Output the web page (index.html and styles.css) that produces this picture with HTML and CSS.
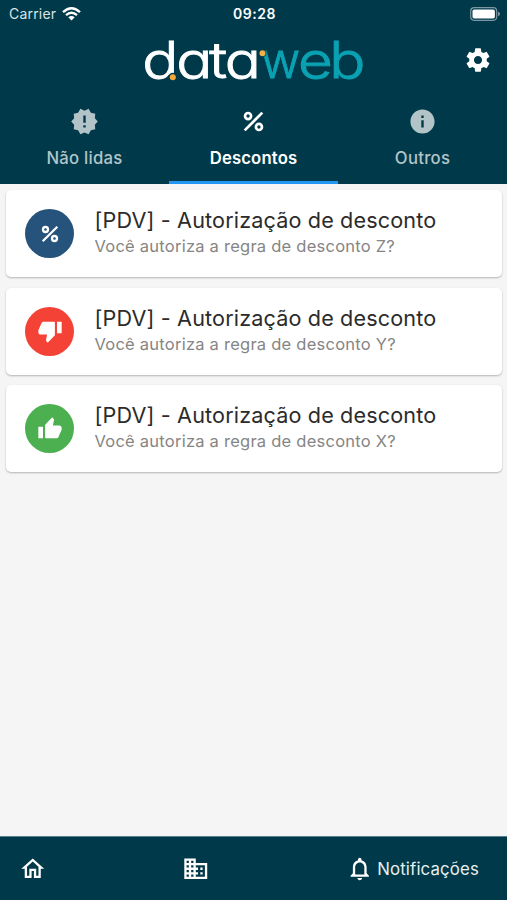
FILE: index.html
```html
<!DOCTYPE html>
<html lang="pt-BR">
<head>
<meta charset="utf-8">
<meta name="viewport" content="width=device-width, initial-scale=1">
<title>Notificações</title>
<link rel="stylesheet" href="styles.css">
</head>
<body>
<div class="app">
  <header class="header">
    <div class="status">
      <div class="carrier"><span class="carrier-name">Carrier</span>
        <svg class="wifi" viewBox="0 0 19 14" fill="none" stroke="#fff" stroke-width="2.3"><path d="M1 5.2Q9.500-2.600 18 5.200M4 8.200Q9.500 3.300 15 8.200"/><path d="M6.300 10.300Q9.500 7.600 12.700 10.300L9.500 13.600Z" fill="#fff" stroke="none"/></svg>
      </div>
      <span class="clock">09:28</span>
      <svg class="battery" viewBox="0 0 30 14"><rect x=".7" y=".7" width="26" height="12.600" rx="3.500" fill="none" stroke="#7d98a3" stroke-width="1.200"/><rect x="2.500" y="2.500" width="22.400" height="9" rx="1.800" fill="#fff"/><path d="M28 4.800q2 .6 2 2.200t-2 2.200z" fill="#7d98a3"/></svg>
    </div>
    <div class="brandbar">
      <svg class="logo" viewBox="0 0 222 44">
        <text class="logo-data" transform="scale(1.2 1)" y="39.500" x="-0.700 27.700 55.300 68.200">data</text>
        <text class="logo-web" transform="scale(.96 1)" y="39.500" x="123">w</text>
        <text class="logo-web" transform="scale(1.2 1)" y="39.500" x="129.200 155.300">eb</text>
        <circle cx="29.800" cy="39.300" r="4.500" fill="#003a4a"/>
        <circle cx="29.800" cy="39.300" r="3" fill="#f5a93b"/>
        <circle cx="119.500" cy="15.200" r="3.800" fill="#003a4a"/>
        <circle cx="119.500" cy="15.200" r="3" fill="#f0b14a"/>
      </svg>
      <svg class="gear" viewBox="0 0 24 24"><path d="M19.430 12.980c.04-.32.07-.64.07-.98s-.03-.66-.07-.98l2.110-1.650c.19-.15.24-.42.12-.64l-2-3.460c-.12-.22-.39-.3-.61-.22l-2.490 1c-.52-.4-1.080-.73-1.690-.98l-.38-2.650C14.460 2.180 14.250 2 14 2h-4c-.25 0-.46.18-.49.42l-.38 2.650c-.61.25-1.170.59-1.690.98l-2.490-1c-.23-.09-.49 0-.61.22l-2 3.460c-.13.22-.07.49.12.64l2.110 1.650c-.04.32-.07.65-.07.98s.03.66.07.98l-2.110 1.650c-.19.15-.24.42-.12.64l2 3.460c.12.22.39.3.61.22l2.490-1c.52.4 1.080.73 1.690.98l.38 2.650c.03.24.24.42.49.42h4c.25 0 .46-.18.49-.42l.38-2.650c.61-.25 1.170-.59 1.690-.98l2.490 1c.23.09.49 0 .61-.22l2-3.460c.12-.22.07-.49-.12-.64l-2.110-1.650zM12 15.500c-1.930 0-3.500-1.570-3.500-3.500s1.570-3.500 3.500-3.500 3.500 1.570 3.500 3.500-1.570 3.500-3.500 3.500z"/></svg>
    </div>
    <nav class="tabs">
      <div class="tab">
        <svg class="tab-icon" viewBox="0 0 24 24"><path d="M23 12l-2.440-2.780.34-3.680-3.610-.82-1.890-3.180L12 3 8.600 1.540 6.710 4.720l-3.610.81.34 3.680L1 12l2.440 2.780-.34 3.690 3.610.82 1.890 3.180L12 21l3.400 1.460 1.890-3.180 3.610-.82-.34-3.680L23 12zm-10 5h-2v-2h2v2zm0-4h-2V7h2v6z"/></svg>
        <span>Não lidas</span>
      </div>
      <div class="tab active">
        <svg class="tab-icon" viewBox="0 0 24 24" fill="none" stroke="#fff" stroke-width="2.2"><circle cx="7.500" cy="7.500" r="2.500"/><circle cx="16.500" cy="16.500" r="2.500"/><path d="M4.700 19.300L19.300 4.700"/></svg>
        <span>Descontos</span>
      </div>
      <div class="tab">
        <svg class="tab-icon" viewBox="0 0 24 24"><path d="M12 2C6.480 2 2 6.480 2 12s4.480 10 10 10 10-4.480 10-10S17.520 2 12 2zm1 15h-2v-6h2v6zm0-8h-2V7h2v2z"/></svg>
        <span>Outros</span>
      </div>
    </nav>
  </header>
  <main class="list">
    <article class="card">
      <div class="avatar blue"><svg viewBox="0 0 24 24" fill="none" stroke="#fff" stroke-width="2.3"><circle cx="7.500" cy="7.500" r="2.500"/><circle cx="16.500" cy="16.500" r="2.500"/><path d="M4.700 19.300L19.300 4.700"/></svg></div>
      <div class="copy"><h2>[PDV] - Autorização de desconto</h2><p>Você autoriza a regra de desconto Z?</p></div>
    </article>
    <article class="card">
      <div class="avatar red"><svg viewBox="0 0 24 24"><path d="M22 4h-4v10h4zM2.170 11.120c-.11.25-.17.520-.17.800V13c0 1.100.9 2 2 2h5.500l-.92 4.650c-.05.22-.02.460.08.660.23.450.52.860.88 1.220L10 22l6.200-6.410V4.500L15.700 4H6.550c-.7 0-1.370.37-1.720.97z"/></svg></div>
      <div class="copy"><h2>[PDV] - Autorização de desconto</h2><p>Você autoriza a regra de desconto Y?</p></div>
    </article>
    <article class="card">
      <div class="avatar green"><svg viewBox="0 0 24 24"><path d="M2 20h4V10H2zM21.830 12.880c.11-.25.17-.520.17-.800V11c0-1.100-.9-2-2-2h-5.500l.92-4.650c.05-.22.02-.460-.08-.660-.23-.450-.52-.860-.88-1.220L14 2 7.800 8.410V19.500l.5.500h9.150c.7 0 1.370-.37 1.720-.97z"/></svg></div>
      <div class="copy"><h2>[PDV] - Autorização de desconto</h2><p>Você autoriza a regra de desconto X?</p></div>
    </article>
  </main>
  <footer class="bottom">
    <svg viewBox="0 0 24 24"><path d="M12 5.690l5 4.500V18h-2v-6H9v6H7v-7.810l5-4.500M12 3L2 12h3v8h6v-6h2v6h6v-8h3L12 3z"/></svg>
    <svg viewBox="0 0 24 24"><path d="M12 7V3H2v18h20V7H12zM6 19H4v-2h2v2zm0-4H4v-2h2v2zm0-4H4V9h2v2zm0-4H4V5h2v2zm4 12H8v-2h2v2zm0-4H8v-2h2v2zm0-4H8V9h2v2zm0-4H8V5h2v2zm10 12h-8v-2h2v-2h-2v-2h2v-2h-2V9h8v10zm-2-8h-2v2h2v-2zm0 4h-2v2h2v-2z"/></svg>
    <div class="notifications">
      <svg viewBox="0 0 24 24"><path d="M12 22c1.100 0 2-.9 2-2h-4c0 1.100.9 2 2 2zm6-6v-5c0-3.070-1.630-5.640-4.500-6.320V4c0-.83-.67-1.500-1.500-1.500s-1.500.67-1.500 1.500v.68C7.640 5.360 6 7.920 6 11v5l-2 2v1h16v-1l-2-2zm-2 1H8v-6c0-2.480 1.510-4.500 4-4.500s4 2.020 4 4.500v6z"/></svg>
      <span>Notificações</span>
    </div>
  </footer>
</div>
</body>
</html>
```
FILE: styles.css
```css
* { box-sizing: border-box; }
body { margin: 0; background: #f5f5f5; font-family: Inter, "Liberation Sans", sans-serif; }
.app { height: 900px; display: flex; flex-direction: column; }
svg { display: block; fill: #fff; flex: none; }
.header { height: 184px; background: #003a4a; color: #fff; display: flex; flex-direction: column; }
.status { height: 27px; display: grid; grid-template-columns: 1fr auto 1fr; align-items: center; padding: 0 7px 0 9px; }
.carrier { display: flex; align-items: center; gap: 6px; font-size: 14px; color: #d9e3e6; letter-spacing: 0.2px; }
.wifi { width: 19px; height: 14px; fill: none; }
.clock { font-size: 14px; font-weight: 600; letter-spacing: 0.5px; }
.battery { width: 30px; height: 14px; justify-self: end; }
.brandbar { height: 71px; display: grid; grid-template-columns: 1fr 222px 1fr; align-items: center; padding: 0 15.5px 6px; }
.logo { grid-column: 2; width: 222px; height: 44px; overflow: visible; }
.logo text { font-size: 50px; font-weight: 300; font-feature-settings: "cv11"; }
.logo-data { fill: #fff; stroke: #fff; stroke-width: 0.9px; }
.logo-web { fill: #0aa2b3; stroke: #0aa2b3; stroke-width: 0.9px; }
.gear { grid-column: 3; justify-self: end; width: 28px; height: 28px; }
.tabs { flex: 1; display: grid; grid-template-columns: repeat(3, 1fr); }
.tab { display: flex; flex-direction: column; align-items: center; padding-top: 9px; gap: 11px; border-bottom: 3px solid transparent; color: #b3c4c9; font-size: 16.7px; line-height: 22px; font-weight: 500; letter-spacing: 0.27px; }
.tab-icon { width: 29px; height: 29px; fill: #b3c4c9; }
.active { color: #fff; font-weight: 600; letter-spacing: 0.15px; border-color: #2196f3; }
.active .tab-icon { fill: none; }
.list { flex: 1; padding: 6px 5px 0 6px; display: flex; flex-direction: column; gap: 10.6px; }
.card { height: 87px; display: flex; align-items: center; gap: 20.5px; padding: 0 19px; background: #fff; border-radius: 5px; box-shadow: 0 1px 2px rgba(0, 0, 0, 0.27); }
.avatar { width: 49px; height: 49px; flex: none; border-radius: 50%; display: grid; place-items: center; }
.avatar svg { width: 28px; height: 28px; }
.blue { background: #25537b; }
.avatar.blue svg { fill: none; width: 24px; height: 24px; }
.red { background: #f44336; }
.green { background: #4caf50; }
h2, p { margin: 0; font-weight: 400; white-space: nowrap; }
.copy { padding-bottom: 2px; }
h2 { font-size: 21.6px; line-height: 27px; letter-spacing: 0.15px; color: #2b2b2b; }
p { font-size: 16.5px; line-height: 24px; letter-spacing: 0.24px; color: #858585; }
.bottom { height: 64px; background: #003a4a; border-top: 1px solid #55808c; display: flex; align-items: center; justify-content: space-between; padding: 0 28px 0 19px; color: #e8eff1; }
.bottom svg { width: 27.5px; height: 27.5px; }
.notifications { display: flex; align-items: center; gap: 4px; font-size: 16.8px; letter-spacing: 0.15px; }
```
